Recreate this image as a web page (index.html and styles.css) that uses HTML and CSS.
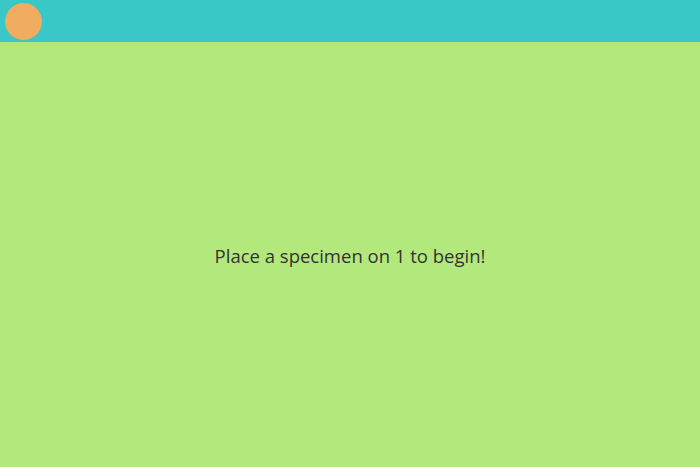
FILE: index.html
```html
<!DOCTYPE html>
<html>
<head>
<meta charset="utf-8">
<link rel="stylesheet" href="styles.css">
</head>
<body>
<header class="topbar">
  <div class="avatar"></div>
</header>
<main class="stage">
  <p class="message">Place a specimen on 1 to begin!</p>
</main>
</body>
</html>
```
FILE: styles.css
```css
html, body {
  margin: 0;
  height: 100%;
}
body {
  display: flex;
  flex-direction: column;
  background: #b3e87c;
  font-family: "Open Sans", "Noto Sans", sans-serif;
}
.topbar {
  height: 42px;
  background: #3ac7c7;
  display: flex;
  align-items: center;
  padding-left: 5px;
  flex-shrink: 0;
}
.avatar {
  width: 37px;
  height: 37px;
  border-radius: 50%;
  background: #f0ad5f;
}
.stage {
  flex: 1;
  display: flex;
  align-items: center;
  justify-content: center;
  padding-top: 1px;
}
.message {
  margin: 0;
  font-size: 18.5px;
  color: #333333;
}
```
